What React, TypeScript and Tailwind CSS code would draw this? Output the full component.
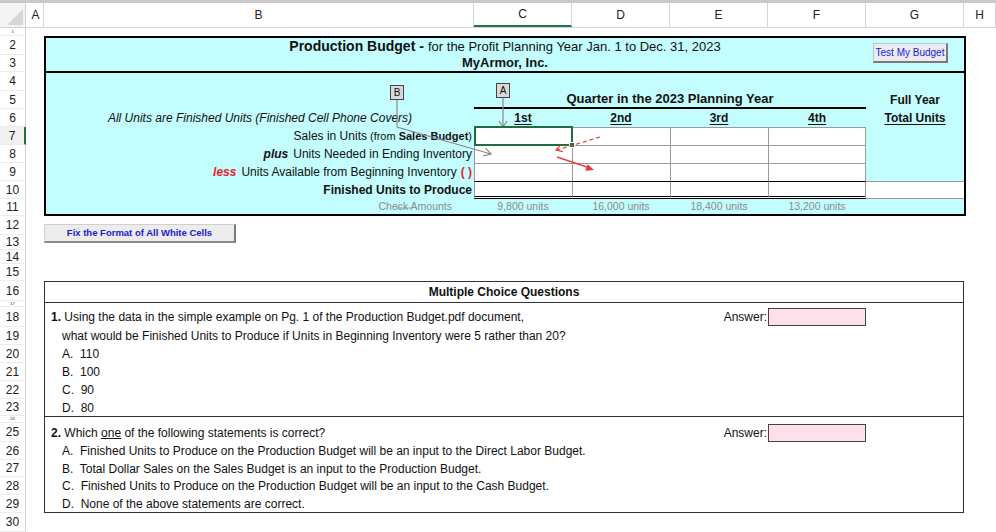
import React from 'react';

// row number / height pairs, in sheet order
const ROWS: [string, number][] = [
  ['1', 8], ['2', 19], ['3', 17], ['4', 19], ['5', 18], ['6', 18], ['7', 18], ['8', 18],
  ['9', 18], ['10', 18], ['11', 17], ['12', 19], ['13', 15], ['14', 14], ['15', 17],
  ['16', 20], ['17', 6], ['18', 20], ['19', 18], ['20', 18], ['21', 18], ['22', 18],
  ['23', 17], ['24', 7], ['25', 19], ['26', 18], ['27', 17], ['28', 18], ['29', 18], ['30', 19],
];

const COLS: [string, number][] = [
  ['A', 18], ['B', 430], ['C', 98], ['D', 98], ['E', 98], ['F', 98], ['G', 98], ['H', 32],
];

const QUARTERS = ['1st', '2nd', '3rd', '4th'];
const CHECKS = ['9,800 units', '16,000 units', '18,400 units', '13,200 units'];

function ColumnHeader() {
  return (
    <div className="flex h-[28px] border-t-[3px] border-[#c9c9c9] border-b border-b-[#d4d4d4] bg-white">
      <div className="relative w-[26px] border-r border-[#d4d4d4] bg-[#f4f4f4]">
        <svg className="absolute bottom-[2px] right-[2px]" width="16" height="16">
          <polygon points="16,0 16,16 0,16" fill="#d6d6d6" />
        </svg>
      </div>
      {COLS.map(([name, w]) => (
        <div
          key={name}
          style={{ width: w }}
          className={
            name === 'C'
              ? 'flex items-center justify-center border-r border-[#d4d4d4] border-b-2 border-b-[#217346] text-[12px] text-[#222]'
              : 'flex items-center justify-center border-r border-[#d4d4d4] text-[12px] text-[#222]'
          }
        >
          {name === 'A' ? <span className="pl-[2px]">{name}</span> : name}
        </div>
      ))}
    </div>
  );
}

function RowHeader() {
  return (
    <div className="w-[26px] shrink-0 border-r border-[#d4d4d4] bg-white">
      {ROWS.map(([n, h]) => {
        const tiny = h < 10;
        let cls = 'flex items-center justify-center overflow-hidden border-b border-[#ececec] leading-none text-[#222]';
        cls += tiny ? ' text-[4px]' : ' text-[12px]';
        if (n === '7') cls += ' border-r-2 border-r-[#217346] -mr-px bg-[#f1f1f1]';
        return (
          <div key={n} style={{ height: h }} className={cls}>
            {n}
          </div>
        );
      })}
    </div>
  );
}

function BudgetBox() {
  return (
    <div className="ml-[18px] h-[180px] w-[922px] border-2 border-black bg-[#c4fdfe]">
      {/* Title rows 2-3 */}
      <div className="h-[35px] border-b-2 border-black">
        <div className="flex h-[17px] items-center justify-center">
          <span className="text-[14px] font-bold">Production Budget</span>
          <span className="ml-[4px] text-[14px] font-bold">-</span>
          <span className="ml-[4px] text-[13px]">for the Profit Planning Year Jan. 1 to Dec. 31, 2023</span>
        </div>
        <div className="flex h-[16px] items-center justify-center text-[13px] font-bold">MyArmor, Inc.</div>
      </div>

      {/* Rows 4-11 */}
      <div className="grid grid-cols-[428px_98px_98px_98px_98px_98px] grid-rows-[18px_18px_18px_18px_18px_18px_18px_15px]">
        {/* row 4 */}
        <div className="col-span-6" />

        {/* row 5 */}
        <div />
        <div className="col-span-4 flex items-center justify-center border-b-2 border-black text-[13px] font-bold">
          Quarter in the 2023 Planning Year
        </div>
        <div className="flex items-center justify-center text-[12px] font-bold">Full Year</div>

        {/* row 6 */}
        <div className="flex items-center justify-center text-[12px] italic">
          All Units are Finished Units (Finished Cell Phone Covers)
        </div>
        {QUARTERS.map((q) => (
          <div key={q} className="flex items-center justify-center text-[12px] font-bold underline underline-offset-2">
            {q}
          </div>
        ))}
        <div className="flex items-center justify-center text-[12px] font-bold underline underline-offset-2">Total Units</div>

        {/* row 7 */}
        <div className="flex items-center justify-end pr-[2px] text-[12px]">
          Sales in Units<span className="ml-[3px] text-[11px]">(from </span>
          <span className="ml-[3px] text-[11px] font-bold">Sales Budget</span>
          <span className="text-[11px]">)</span>
        </div>
        {QUARTERS.map((q, i) => (
          <div key={q} className={i === 3 ? 'border-l border-r border-t border-[#9a9a9a] bg-white' : 'border-l border-t border-[#9a9a9a] bg-white'} />
        ))}
        <div />

        {/* row 8 */}
        <div className="flex items-center justify-end pr-[2px] text-[12px]">
          <span className="mr-[5px] font-bold italic">plus</span>Units Needed in Ending Inventory
        </div>
        {QUARTERS.map((q, i) => (
          <div key={q} className={i === 3 ? 'border-l border-r border-t border-[#9a9a9a] bg-white' : 'border-l border-t border-[#9a9a9a] bg-white'} />
        ))}
        <div />

        {/* row 9 */}
        <div className="flex items-center justify-end pr-[2px] text-[12px]">
          <span className="mr-[5px] font-bold italic text-[#e8222a]">less</span>Units Available from Beginning Inventory
          <span className="ml-[4px] font-bold text-[#e8222a]">( )</span>
        </div>
        {QUARTERS.map((q, i) => (
          <div key={q} className={i === 3 ? 'border-l border-r border-t border-[#9a9a9a] bg-white' : 'border-l border-t border-[#9a9a9a] bg-white'} />
        ))}
        <div />

        {/* row 10 */}
        <div className="flex items-center justify-end pr-[2px] text-[12px] font-bold">Finished Units to Produce</div>
        {QUARTERS.map((q, i) => (
          <div
            key={q}
            className={
              i === 3
                ? 'border-x border-x-[#9a9a9a] border-t border-t-black border-b-[3px] border-double border-b-black bg-white'
                : 'border-l border-l-[#9a9a9a] border-t border-t-black border-b-[3px] border-double border-b-black bg-white'
            }
          />
        ))}
        <div className="border-y border-[#9a9a9a] bg-white" />

        {/* row 11 */}
        <div className="flex items-center justify-end pr-[22px] text-[10.5px] text-[#8a8a8a]">Check Amounts</div>
        {CHECKS.map((c) => (
          <div key={c} className="flex items-center justify-center text-[10.5px] text-[#8a8a8a]">
            {c}
          </div>
        ))}
        <div />
      </div>
    </div>
  );
}

function AnswerBox({ h }: { h: number }) {
  return (
    <div className="mr-[97px] flex items-center">
      <span className="mr-[1px] text-[12px]">Answer:</span>
      <div style={{ height: h }} className="w-[98px] border border-[#444] bg-[#fde0ea]" />
    </div>
  );
}

function Questions() {
  return (
    <div className="ml-[18px] w-[920px] border border-[#333] bg-white text-[12px]">
      <div className="flex h-[21px] items-center justify-center border-b border-[#333] font-bold">
        Multiple Choice Questions
      </div>

      {/* question 1 */}
      <div className="border-b border-[#333]">
        <div className="h-[4px]" />
        <div className="flex h-[20px] items-center justify-between pl-[6px]">
          <div>
            <span className="font-bold">1.</span> Using the data in the simple example on Pg. 1 of the Production Budget.pdf document,
          </div>
          <AnswerBox h={18} />
        </div>
        <div className="flex h-[18px] items-center pl-[17px]">
          what would be Finished Units to Produce if Units in Beginning Inventory were 5 rather than 20?
        </div>
        <div className="flex h-[18px] items-center pl-[17px]">A.&nbsp; 110</div>
        <div className="flex h-[18px] items-center pl-[17px]">B.&nbsp; 100</div>
        <div className="flex h-[18px] items-center pl-[17px]">C.&nbsp; 90</div>
        <div className="flex h-[17px] items-center pl-[17px]">D.&nbsp; 80</div>
      </div>

      {/* question 2 */}
      <div>
        <div className="h-[6px]" />
        <div className="flex h-[19px] items-center justify-between pl-[6px]">
          <div>
            <span className="font-bold">2.</span> Which <span className="underline">one</span> of the following statements is correct?
          </div>
          <AnswerBox h={18} />
        </div>
        <div className="flex h-[18px] items-center pl-[17px]">
          A.&nbsp; Finished Units to Produce on the Production Budget will be an input to the Direct Labor Budget.
        </div>
        <div className="flex h-[17px] items-center pl-[17px]">
          B.&nbsp; Total Dollar Sales on the Sales Budget is an input to the Production Budget.
        </div>
        <div className="flex h-[18px] items-center pl-[17px]">
          C.&nbsp; Finished Units to Produce on the Production Budget will be an input to the Cash Budget.
        </div>
        <div className="flex h-[17px] items-center pl-[17px]">D.&nbsp; None of the above statements are correct.</div>
      </div>
    </div>
  );
}

function Arrows() {
  return (
    <svg className="pointer-events-none absolute left-0 top-0" width="996" height="532">
      {/* arrow from B marker */}
      <polyline points="397,100 397,127 491,154" fill="none" stroke="#8a8a8a" strokeWidth="1.2" />
      <polyline points="485.4,148.2 491,154 483.2,155.9" fill="none" stroke="#8a8a8a" strokeWidth="1.2" />
      {/* arrow from A marker */}
      <line x1="503" y1="98" x2="503" y2="127" stroke="#8a8a8a" strokeWidth="1.2" />
      <polyline points="499,121 503,127 507,121" fill="none" stroke="#8a8a8a" strokeWidth="1.2" />
      {/* strike in Check Amounts */}
      <line x1="396" y1="208" x2="411" y2="208" stroke="#9a9a9a" strokeWidth="1" />
      {/* selected cell C7 */}
      <rect x="475" y="127" width="97" height="18" fill="none" stroke="#1f6e43" strokeWidth="2" />
      <rect x="569.5" y="142.5" width="5" height="5" fill="#1f6e43" stroke="#ffffff" strokeWidth="1" />
      {/* red trace arrows */}
      <line x1="600" y1="137" x2="557" y2="150" stroke="#e53935" strokeWidth="1.2" strokeDasharray="4 3" />
      <polyline points="562.8,151.6 556,150 560.8,144.9" fill="none" stroke="#e53935" strokeWidth="1.2" />
      <line x1="557" y1="157" x2="588" y2="167.3" stroke="#e53935" strokeWidth="1.4" />
      <polygon points="594,170 585.3,170.8 587.5,164.2" fill="#e53935" />
    </svg>
  );
}

export default function App() {
  return (
    <div className="relative h-[532px] w-[996px] overflow-hidden bg-white font-['Liberation_Sans',Arial,sans-serif] text-[#111]">
      <ColumnHeader />
      <div className="flex">
        <RowHeader />
        <div className="flex-1">
          {/* row 1 */}
          <div className="h-[8px]" />
          <BudgetBox />

          {/* rows 12-15 */}
          <div className="h-[65px] pt-[8px]">
            <button className="ml-[18px] flex h-[19px] w-[192px] items-center justify-center border-l border-t border-[#cfcfcf] border-b-2 border-r-2 border-b-[#8a8a8a] border-r-[#7a7a7a] bg-[#ececec] text-[9.5px] font-bold text-[#1a1acc]">
              Fix the Format of All White Cells
            </button>
          </div>

          <Questions />
        </div>
      </div>

      <Arrows />

      {/* floating markers and button */}
      <div className="absolute left-[390px] top-[85px] flex h-[15px] w-[14px] items-center justify-center border border-[#444] bg-[#d9d9d9] text-[10px] leading-none">
        B
      </div>
      <div className="absolute left-[496px] top-[83px] flex h-[15px] w-[14px] items-center justify-center border border-[#444] bg-[#d9d9d9] text-[10px] leading-none">
        A
      </div>
      <button className="absolute left-[873px] top-[43px] flex h-[20px] w-[75px] items-center justify-center border-l border-t border-[#c4c4c4] border-b-2 border-r-2 border-b-[#7a7a7a] border-r-[#7a7a7a] bg-[#ebebf0] text-[10px] text-[#1b1bd0]">
        Test My Budget
      </button>
    </div>
  );
}
